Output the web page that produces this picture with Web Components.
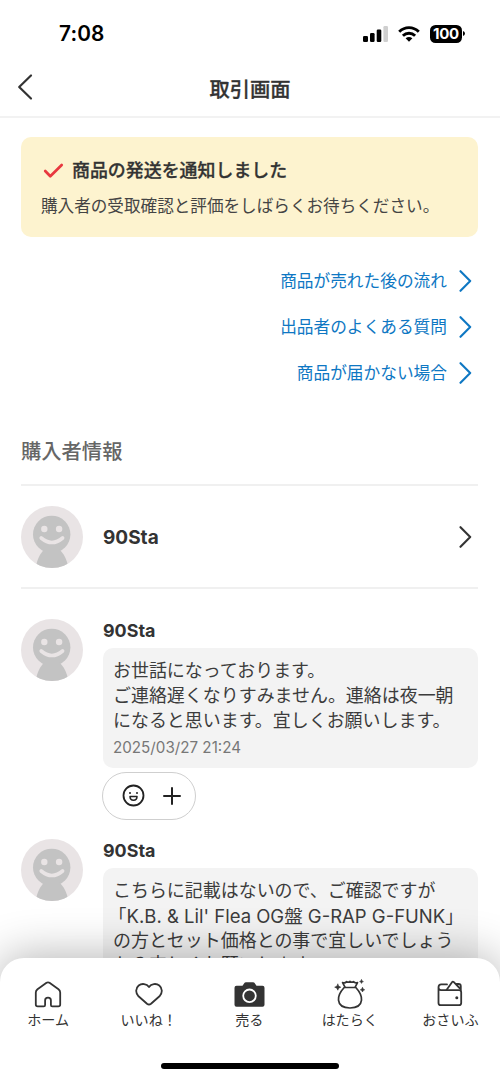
<!DOCTYPE html>
<html lang="ja">
<head>
<meta charset="utf-8">
<title>取引画面</title>
<style>
html,body{margin:0;padding:0;background:#fff}
body{font-family:Inter,"Noto Sans CJK JP",sans-serif;color:#333;-webkit-font-smoothing:antialiased}
</style>
</head>
<body>
<trade-screen></trade-screen>
<script>
const define = (name, html) => {
  const t = document.createElement('template');
  t.innerHTML = html;
  customElements.define(name, class extends HTMLElement {
    constructor() {
      super();
      this.attachShadow({ mode: 'open' }).appendChild(t.content.cloneNode(true));
    }
  });
};

define('status-bar', `
<style>
:host{display:flex;height:60px;box-sizing:border-box;padding:7px 35px 0 59px;align-items:center;justify-content:space-between;color:#000}
.time{font-size:20.8px;font-weight:600;line-height:24px;letter-spacing:.15px}
.icons{display:flex;align-items:center;gap:10px}
.level{display:flex;align-items:center}
.num{display:flex;align-items:center;justify-content:center;width:32px;height:18px;border-radius:5.5px;background:#000;color:#fff;font-size:15px;font-weight:700;letter-spacing:-.2px}
svg{display:block}
</style>
<span class="time">7:08</span>
<div class="icons">
  <svg width="25" height="16" viewBox="0 0 25 16"><rect x="0" y="10" width="5" height="6" rx="1.3"/><rect x="7" y="7" width="4.6" height="9" rx="1.3"/><rect x="13.7" y="3.4" width="4.6" height="12.6" rx="1.3"/><rect x="20.4" y="0" width="4.6" height="16" rx="1.3" fill="#cfcfcf"/></svg>
  <svg width="22" height="16" viewBox="0 0 22 16" fill="none" stroke="#000" stroke-width="2.9"><path d="M1.2 5.7C6.8.2 15.2.2 20.8 5.7"/><path d="M4.9 9.8c3.5-3.4 8.7-3.4 12.2 0"/><path d="M7.6 12.3Q11 9.8 14.4 12.3L11 15.8Z" fill="#000" stroke="none"/></svg>
  <div class="level"><span class="num">100</span><svg width="3" height="7" viewBox="0 0 3 7"><path d="M1 1Q3 1.8 3 3.5T1 6Z"/></svg></div>
</div>`);

define('nav-header', `
<style>
:host{display:grid;grid-template-columns:60px 1fr 60px;align-items:center;height:58px;box-sizing:border-box;border-bottom:2px solid #f2f2f2;color:#333}
svg{display:block;margin-left:17px;margin-top:-3px}
h1{margin:3px 0 0;text-align:center;font-size:20.3px;font-weight:500;-webkit-text-stroke:.3px #333;line-height:28px}
</style>
<svg width="17" height="28" viewBox="0 0 17 28" fill="none" stroke="#333" stroke-width="2.2" stroke-linecap="round" stroke-linejoin="round"><path d="M14 2.5 2.2 14 14 25.5"/></svg>
<h1><slot></slot></h1>`);

define('notice-banner', `
<style>
:host{display:flex;flex-direction:column;box-sizing:border-box;height:100px;margin:19px 22px 0 21px;padding:21px 20px 0;border-radius:10px;background:#fdf3cf}
.title{display:flex;align-items:center;gap:8px;padding-left:2px;font-size:17.95px;font-weight:500;-webkit-text-stroke:.3px #333;line-height:26px}
.title svg{margin-top:-1px}
.sub{margin-top:10px;font-size:16.6px;line-height:25px;white-space:nowrap;color:#444}
</style>
<div class="title"><svg width="21" height="17" viewBox="0 0 21 17" fill="none" stroke="#e8383f" stroke-width="2.7" stroke-linecap="round" stroke-linejoin="round"><path d="M2.2 9 7.3 14.3 18.7 3"/></svg><slot name="title"></slot></div>
<div class="sub"><slot></slot></div>`);

define('chevron-icon', `
<style>:host{display:block;width:13px;height:22px}svg{display:block}</style>
<svg width="13" height="22" viewBox="0 0 13 22" fill="none" stroke="currentColor" stroke-width="2.1" stroke-linecap="round" stroke-linejoin="round"><path d="M1.5 1.2 11.2 11 1.5 20.8"/></svg>`);

define('help-link', `
<style>
:host{display:flex;align-items:center;justify-content:flex-end;gap:12px;height:46px;color:#0e77c3;font-size:16.7px;line-height:24px}
</style>
<slot></slot><chevron-icon></chevron-icon>`);

define('user-avatar', `
<style>:host{display:block;width:62px;height:62px;border-radius:50%;overflow:hidden;background:#e9e4e5;flex:none}svg{display:block}</style>
<svg width="62" height="62" viewBox="0 0 62 62"><g fill="#c3c3c3"><circle cx="30.7" cy="28.4" r="18.7"/><path d="M23 43.5H38.5C43 48 46 53 47.5 63H14.5C16 53 19 48 23 43.5Z"/></g><g fill="#e9e4e5"><circle cx="23.3" cy="23" r="3.2"/><circle cx="38.1" cy="23" r="3.2"/></g><path d="M20.2 32Q30.9 41 41.6 32" fill="none" stroke="#e9e4e5" stroke-width="3.6" stroke-linecap="round"/></svg>`);

define('buyer-row', `
<style>
:host{display:flex;align-items:center;height:105px;margin:0 22px 0 21px;border-top:2px solid #f0f0f0;border-bottom:2px solid #f0f0f0;box-sizing:border-box}
b{flex:1;margin:1px 0 0 20px;font-size:19px;font-weight:650}
chevron-icon{margin-right:6px}
</style>
<user-avatar></user-avatar><b><slot></slot></b><chevron-icon></chevron-icon>`);

define('chat-message', `
<style>
:host{display:flex;gap:20px;margin:0 22px 0 21px}
.col{flex:1;min-width:0}
.name{font-size:17.9px;font-weight:650;line-height:24px;height:29px}
.bubble{border-radius:10px;background:#f3f3f3;padding:11.4px 0 8.5px 10px;font-size:17.97px;line-height:24.7px;white-space:nowrap;color:#3c3c3c}
::slotted(time){display:block;margin-top:4px;font-size:15.2px;line-height:22px;color:#777}
::slotted(p){margin:0;height:24.7px}
</style>
<user-avatar></user-avatar>
<div class="col"><div class="name"><slot name="name"></slot></div><div class="bubble"><slot></slot></div><slot name="reaction"></slot></div>`);

define('reaction-button', `
<style>
:host{display:flex;align-items:center;justify-content:space-between;box-sizing:border-box;width:94px;height:48px;margin:4px 0 0 -1px;padding:0 14px 0 19px;border:1.5px solid #cfcfcf;border-radius:24px;background:#fff}
svg{display:block}
</style>
<svg width="23" height="23" viewBox="0 0 23 23" fill="none" stroke="#222" stroke-width="1.8"><circle cx="11.5" cy="11.5" r="10"/><path d="M8 12.5h7c0 2.3-1.4 3.7-3.5 3.7S8 14.8 8 12.5Z" stroke-width="1.5" stroke-linejoin="round"/><circle cx="8" cy="9" r="1" fill="#222" stroke="none"/><circle cx="15" cy="9" r="1" fill="#222" stroke="none"/></svg>
<svg width="18" height="18" viewBox="0 0 18 18" fill="none" stroke="#222" stroke-width="2" stroke-linecap="round"><path d="M9 1v16M1 9h16"/></svg>`);

define('tab-item', `
<style>
:host{display:flex;flex-direction:column;align-items:center;width:100px;color:#333;font-size:14.1px;line-height:20px;white-space:nowrap}
::slotted(svg){display:block;height:32px;width:36px;overflow:visible}
</style>
<slot name="icon"></slot><span><slot></slot></span>`);

define('tab-bar', `
<style>
:host{position:absolute;left:0;right:0;bottom:0;height:122px;box-sizing:border-box;padding-top:20px;border-radius:24px 24px 0 0;background:#fff;box-shadow:0 -2px 46px rgba(0,0,0,.3);display:flex;flex-direction:column;justify-content:space-between}
.tabs{display:flex;justify-content:center;margin:0 -.5px 0 -2px}
.tabs ::slotted(*){flex:none;width:100.6px}
.home{width:178px;height:6px;border-radius:3px;background:#000;margin:0 auto 11px}
</style>
<div class="tabs"><slot></slot></div><div class="home"></div>`);

define('trade-screen', `
<style>
:host{display:block;position:relative;width:500px;height:1080px;overflow:hidden;background:#fff}
.links{padding:21px 28px 0 0}
h2{margin:46px 0 0 21px;height:42px;font-size:20.3px;font-weight:500;line-height:20px;color:#666}
.first{margin-top:30px}
.second{margin-top:19px}
.open{display:inline-block;margin-left:-4.4px;font-size:17.97px}
.latin{font-size:18.5px}
</style>
<status-bar></status-bar>
<nav-header>取引画面</nav-header>
<notice-banner><span slot="title">商品の発送を通知しました</span>購入者の受取確認と評価をしばらくお待ちください。</notice-banner>
<div class="links"><help-link>商品が売れた後の流れ</help-link><help-link>出品者のよくある質問</help-link><help-link>商品が届かない場合</help-link></div>
<h2>購入者情報</h2>
<buyer-row>90Sta</buyer-row>
<chat-message class="first"><span slot="name">90Sta</span><p>お世話になっております。</p><p>ご連絡遅くなりすみません。連絡は夜一朝</p><p>になると思います。宜しくお願いします。</p><time>2025/03/27 21:24</time><reaction-button slot="reaction"></reaction-button></chat-message>
<chat-message class="second"><span slot="name">90Sta</span><p>こちらに記載はないので、ご確認ですが</p><p class="latin"><span class="open">「</span>K.B. &amp; Lil' Flea OG盤 G-RAP G-FUNK」</p><p>の方とセット価格との事で宜しいでしょう</p><p>か？宜しくお願いします。</p></chat-message>
<tab-bar>
<tab-item><svg slot="icon" viewBox="0 0 36 32" fill="none" stroke="#333" stroke-width="1.8" stroke-linejoin="round"><path d="M18 4.3Q18.8 4.3 19.5 4.8L28.5 11.2Q30.2 12.5 30.2 14.5V26.5Q30.2 28.4 28.3 28.4H22.3Q20.9 28.4 20.9 27V22.5Q20.9 19.7 18 19.7T15.1 22.5V27Q15.1 28.4 13.7 28.4H7.7Q5.8 28.4 5.8 26.5V14.5Q5.8 12.5 7.5 11.2L16.5 4.8Q17.2 4.3 18 4.3Z"/></svg>ホーム</tab-item>
<tab-item><svg slot="icon" viewBox="0 0 36 32" fill="none" stroke="#333" stroke-width="1.8" stroke-linejoin="round"><path d="M18 9C20.3 5.6 25.3 5.1 28.3 7.5 31.8 10.4 31.5 15.3 28.5 18.3L20 25.7Q18 27.3 16 25.7L7.5 18.3C4.5 15.3 4.2 10.4 7.7 7.5 10.7 5.1 15.7 5.6 18 9Z"/></svg>いいね！</tab-item>
<tab-item><svg slot="icon" viewBox="0 0 36 32"><path d="M11.5 7.8 13.6 4.8Q14 4.2 14.8 4.2H22.2Q23 4.2 23.4 4.8L25.5 7.8H31.5Q33.5 7.8 33.5 9.8V26.8Q33.5 28.8 31.5 28.8H5.5Q3.5 28.8 3.5 26.8V9.8Q3.5 7.8 5.5 7.8Z" fill="#333"/><circle cx="18.5" cy="17.8" r="6.3" fill="none" stroke="#fff" stroke-width="1.8"/></svg>売る</tab-item>
<tab-item><svg slot="icon" viewBox="0 0 36 32" fill="none" stroke="#333" stroke-width="1.7" stroke-linejoin="round" stroke-linecap="round"><path d="M12.2 9.5H23.8C27.5 13.5 30 17.5 29.5 22.2 29 27.2 25.5 30 18 30S7 27.2 6.5 22.2C6 17.5 8.5 13.5 12.2 9.5Z"/><path d="M13 9.2 10.6 4.6Q13 5.6 14.6 3.6 16.4 5 18 3.3 19.7 5 21.5 3.6 23 5.6 25.5 4.6L23.2 9.2"/><path d="M5.8 6.2Q6 8.8 8.8 9.2 6 9.6 5.8 12.2 5.5 9.6 2.7 9.2 5.5 8.8 5.8 6.2ZM29.5 1.8Q29.8 3.4 31.4 3.6 29.8 3.8 29.5 5.4 29.2 3.8 27.6 3.6 29.2 3.4 29.5 1.8ZM30.5 9.6Q30.8 11.5 32.7 11.8 30.8 12.1 30.5 14 30.2 12.1 28.3 11.8 30.2 11.5 30.5 9.6Z" fill="#333" stroke-width=".6"/></svg>はたらく</tab-item>
<tab-item><svg slot="icon" viewBox="0 0 36 32" fill="none" stroke="#333" stroke-width="1.8" stroke-linejoin="round" stroke-linecap="round"><path d="M6.5 9.5V25Q6.5 27.2 8.7 27.2H27Q29.2 27.2 29.2 25V14.3Q29.2 12.1 27 12.1H9Q6.5 12.1 6.5 9.3 6.5 6.4 9.3 6.4H15"/><path d="M14.5 12 20.2 4Q20.8 3.2 21.6 3.9L28 10.5M24.5 6H26.5Q28.8 6 28.8 8.3V12"/><circle cx="24.8" cy="19.8" r="1.5" fill="#333" stroke="none"/></svg>おさいふ</tab-item>
</tab-bar>`);
</script>
</body>
</html>
